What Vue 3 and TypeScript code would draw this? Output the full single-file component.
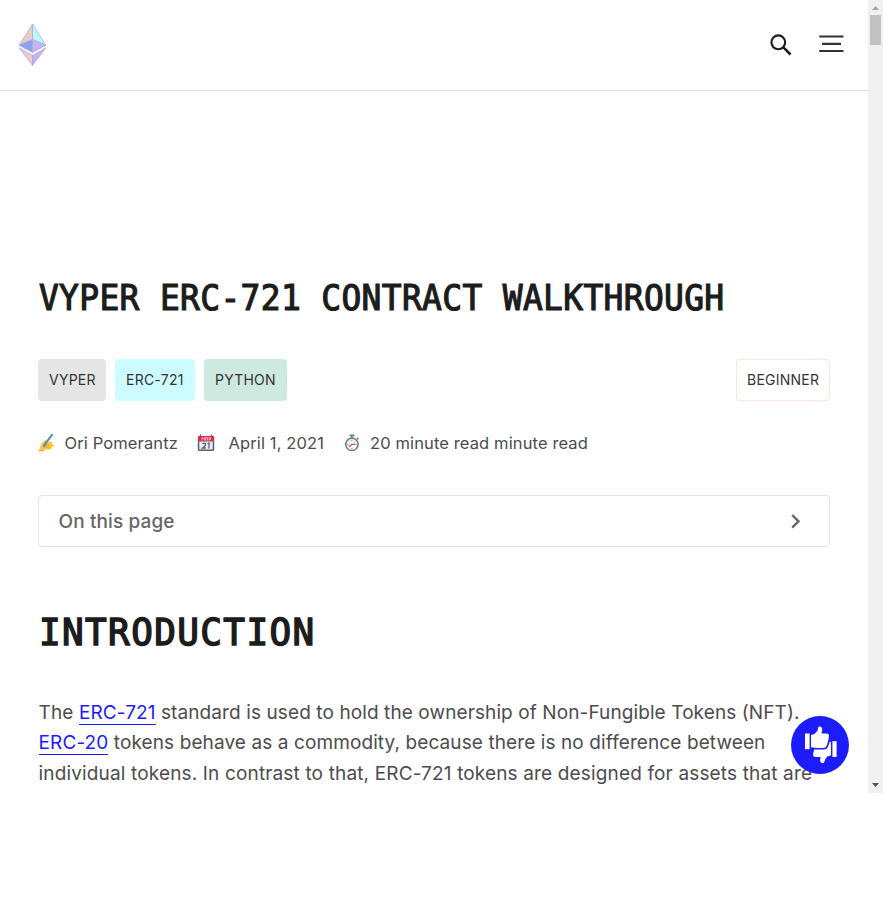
<script setup lang="ts">
interface Tag {
  label: string
  tone: string
}

const tags: Tag[] = [
  { label: 'VYPER', tone: 'gray' },
  { label: 'ERC-721', tone: 'cyan' },
  { label: 'PYTHON', tone: 'green' },
]
</script>

<template>
  <div class="viewport">
    <div class="page">
      <header class="nav">
        <a class="logo" aria-label="Home">
          <svg width="29" height="44" viewBox="0 0 28 44" preserveAspectRatio="none">
            <g stroke="#a9a3ea" stroke-width=".7" stroke-linejoin="round">
              <path d="M14 1 1 22.300 14 16.500Z" fill="#edcbc3" />
              <path d="M14 1 27 22.300 14 16.500Z" fill="#b9fbef" />
              <path d="M14 16.500 1 22.300 14 29.500Z" fill="#88a6ee" />
              <path d="M14 16.500 27 22.300 14 29.500Z" fill="#c5b5f1" />
              <path d="M1 24.800 14 32.500V42.500Z" fill="#edcbc3" />
              <path d="M27 24.800 14 32.500V42.500Z" fill="#c9b3f4" />
            </g>
          </svg>
        </a>
        <div class="actions">
          <svg width="24" height="24" viewBox="0 0 24 24" fill="none" stroke="#1c1c1c">
            <circle cx="9.300" cy="9.300" r="6.900" stroke-width="2.100" />
            <path d="M14.200 14.200 21.500 21.500" stroke-width="2.500" />
          </svg>
          <svg class="menu" width="26" height="20" viewBox="0 0 26 20" stroke="#333" stroke-width="2.200">
            <path d="M1.200 2.500H25.500M4 9.800H23M1.200 17H25.500" />
          </svg>
        </div>
      </header>
      <main class="content">
        <h1>VYPER ERC-721 CONTRACT WALKTHROUGH</h1>
        <div class="tags">
          <span v-for="tag in tags" :key="tag.label" class="tag" :class="tag.tone">{{ tag.label }}</span>
          <span class="tag level">BEGINNER</span>
        </div>
        <div class="meta">
          <svg width="17" height="18" viewBox="0 0 18 18" preserveAspectRatio="none">
            <path d="M1 16.500 3.500 9.500 7.500 6 10 7.500 14 7.500 15.500 9 14.500 10 17 11 16.500 12.500 14.500 12.800 15 14.300 11 15.800 6 15.500Z" fill="#fbc743" />
            <path d="M7 10.500 11.500 11.500M8 13.500 13 13" stroke="#e59a27" stroke-width=".8" fill="none" />
            <path d="M14.800.8 9 8 6.300 12.300" stroke="#4289c1" stroke-width="2" fill="none" stroke-linecap="round" />
            <path d="M.5 16.700H7" stroke="#d68b2d" />
          </svg>
          <span class="author">Ori Pomerantz</span>
          <svg width="18" height="18" viewBox="0 0 18 18">
            <rect x=".8" y="2" width="16.400" height="15" rx="1.500" fill="#58656f" />
            <path d="M1 3Q1 2 2 2H16Q17 2 17 3V7.500H1Z" fill="#d92f48" />
            <rect x="2.300" y="7.500" width="13.400" height="8" fill="#e7eef2" />
            <path d="M3.500.5V3M14.500.5V3" stroke="#59636c" stroke-width="1.300" />
            <path d="M5 6.500V3.500L6.300 5 7.600 3.500V6.500M8.800 6.500V3.700H10.500V6.500M12 6.500V3.700H13.500V6" stroke="#ffd3dc" stroke-width=".8" fill="none" />
            <path d="M5.300 9.300H8.300V11.500L5.500 14H8.900M10.500 9.800 12 9V14.500" stroke="#59656e" stroke-width="1.300" fill="none" />
          </svg>
          <span class="date">April 1, 2021</span>
          <svg width="18" height="18" viewBox="0 0 18 18">
            <path d="M6.500 1.300H11.300M8.900 1V4M14 4 15.300 5.300" stroke="#6d7f88" stroke-width="1.800" />
            <circle cx="8.900" cy="10.300" r="6.200" fill="#f7fafb" stroke="#6d7f88" stroke-width="1.500" />
            <path d="M8.900 5.500V7M8.900 14V15.300M4 10.300H5.400M12.500 10.300H13.800M5.600 7 6.500 7.900M12.300 7 11.400 7.900" stroke="#78868d" />
            <path d="M6 12.800 8.800 10.400H12.300" stroke="#e2475a" stroke-width="1.300" fill="none" />
          </svg>
          <span class="read">20 minute read minute read</span>
        </div>
        <div class="toc">
          <span>On this page</span>
          <svg width="12" height="16" viewBox="0 0 12 16" fill="none" stroke="#666" stroke-width="2.400">
            <path d="M2.200 2 8.500 8.300 2.200 14.600" />
          </svg>
        </div>
        <h2>INTRODUCTION</h2>
        <p>
          <span class="l1">The <a>ERC-721</a> standard is used to hold the ownership of Non-Fungible Tokens (NFT).</span><br>
          <span class="l2"><a>ERC-20</a> tokens behave as a commodity, because there is no difference between</span><br>
          <span class="l3">individual tokens. In contrast to that, ERC-721 tokens are designed for assets that are</span>
        </p>
      </main>
      <button class="feedback" aria-label="Feedback">
        <svg width="32" height="38" viewBox="0 0 32 38" fill="#fff">
          <rect x="0" y="7.500" width="4.600" height="15.700" />
          <path d="M6 9 9.500 8 12.500 4.800 13.200 1.500Q13.600.2 15 .5 17.400 1 17.200 4L16.500 7.500H22Q24.200 7.800 24 10L23.700 12Q23.700 13.500 23 15L22.600 17Q22.300 18.500 21.500 20 20.700 22 18.700 22H12.500Q10 22 6 21.300Z" />
          <rect x="27.400" y="15.200" width="4.200" height="15.700" />
          <path d="M26 16.200V29.500L22.500 30.200 20.400 33 19.300 36Q18.700 37.600 17 37.100 14.800 36.500 15.200 34L15.500 31H10Q7.800 30.600 8 28.500L8.700 25.500 9.200 23.500H19Q21.700 23.500 22.900 21L24.300 17.500 24.700 15.800Z" />
        </svg>
      </button>
    </div>
    <div class="scrollbar">
      <svg class="arrow" width="15" height="15" viewBox="0 0 15 15"><path d="M4 10H11L7.500 6Z" fill="#a3a3a3" /></svg>
      <div class="thumb"></div>
      <svg class="arrow" width="15" height="15" viewBox="0 0 15 15"><path d="M4 5H11L7.500 9Z" fill="#505050" /></svg>
    </div>
  </div>
</template>

<style>
body {
  background: #fff;
}
</style>

<style scoped>
* {
  box-sizing: border-box;
}
.viewport {
  display: flex;
  height: 793px;
  overflow: hidden;
  font-family: Inter, sans-serif;
  color: #4c4c4c;
}
.page {
  position: relative;
  flex: 1;
  height: 793px;
  overflow: hidden;
}
.nav {
  display: flex;
  justify-content: space-between;
  height: 91px;
  padding: 23px 24px 0 18px;
  border-bottom: 1px solid #e5e5e5;
}
.actions {
  display: flex;
  align-items: flex-start;
  gap: 25px;
  padding-top: 10px;
}
.menu {
  margin-top: 1px;
}
.content {
  padding: 180px 38px 0;
}
h1,
h2 {
  margin: 0;
  font-family: "DejaVu Sans Mono", monospace;
  font-weight: 400;
  color: #1c1c1c;
  white-space: nowrap;
  transform-origin: 0 50%;
}
h1 {
  height: 54px;
  padding-left: 1px;
  line-height: 54px;
  font-size: 35px;
  letter-spacing: 0.38px;
  transform: scaleX(0.94);
  -webkit-text-stroke: 1.2px #1c1c1c;
}
.tags {
  display: flex;
  gap: 9px;
  margin-top: 34px;
}
.tag {
  height: 42px;
  padding: 0 11px;
  border-radius: 4px;
  font-size: 14px;
  line-height: 42px;
  letter-spacing: 0.24px;
  color: #333;
}
.gray {
  width: 68px;
  background: #e5e5e5;
}
.cyan {
  width: 80px;
  background: #ccfcff;
}
.green {
  width: 83px;
  background: #ceeae0;
}
.level {
  width: 94px;
  margin-left: auto;
  padding: 0 10px;
  border: 1px solid #ffe4d9;
  line-height: 40px;
}
.meta {
  display: flex;
  align-items: center;
  height: 26px;
  margin-top: 29px;
  font-size: 16.5px;
  letter-spacing: 0.12px;
  white-space: nowrap;
}
.author {
  width: 132px;
  margin-left: 9.500px;
}
.date {
  width: 100px;
  margin: 0 14px 0 14px;
}
.read {
  margin-left: 9.500px;
}
.toc {
  display: flex;
  align-items: center;
  justify-content: space-between;
  height: 52px;
  margin-top: 39px;
  padding: 0 27px 0 19.500px;
  border: 1px solid #e5e5e5;
  border-radius: 4px;
  font-size: 19px;
  letter-spacing: 0.12px;
  font-weight: 500;
  color: #666;
}
h2 {
  height: 60px;
  margin-top: 55px;
  padding-left: 1px;
  line-height: 60px;
  font-size: 37.5px;
  letter-spacing: 1.43px;
  transform: scaleX(0.96);
  -webkit-text-stroke: 1.5px #1c1c1c;
}
p {
  margin: 36px 0 0 0.6px;
  font-size: 19px;
  line-height: 30.4px;
  letter-spacing: 0.1px;
  white-space: nowrap;
}
p a {
  color: #1c1cff;
  border-bottom: 1px solid #1c1cff;
}
.l3 {
  letter-spacing: 0.15px;
}
.feedback {
  position: absolute;
  left: 791px;
  top: 716px;
  display: flex;
  align-items: center;
  justify-content: center;
  width: 58px;
  height: 58px;
  padding: 0 0 0 1px;
  border: 0;
  border-radius: 50%;
  background: #1c1cff;
}
.scrollbar {
  display: flex;
  flex-direction: column;
  align-items: center;
  width: 15px;
  background: #f0f0f0;
}
.thumb {
  width: 11px;
  height: 30px;
  margin-bottom: auto;
  background: #c1c1c1;
}
</style>
